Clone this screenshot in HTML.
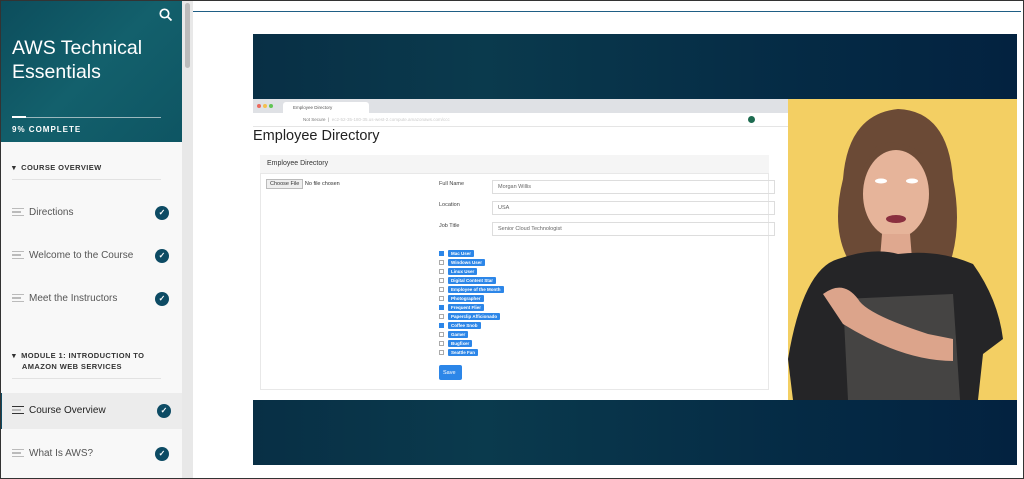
<!DOCTYPE html><html><head><style>
*{margin:0;padding:0;box-sizing:border-box}
body{width:1024px;height:479px;overflow:hidden;background:#fff;font-family:"Liberation Sans",sans-serif;position:relative}
.frame{position:absolute;inset:0;border:1px solid #333;pointer-events:none;z-index:9}
.side{position:absolute;left:0;top:0;width:182px;height:479px;background:#f8f8f8}
.hdr{position:absolute;left:0;top:0;width:182px;height:142px;background:linear-gradient(135deg,#0c4d5c,#13606c 50%,#0e5563)}
.hdr h1{position:absolute;left:12px;top:36px;color:#fff;font-size:19.5px;font-weight:normal;line-height:24px}
.bar{position:absolute;left:12px;top:117px;width:149px;height:1px;background:#9bb8bd}
.bar i{position:absolute;left:0;top:-1px;width:14px;height:2px;background:#fff}
.pct{position:absolute;left:12px;top:125px;color:#fff;font-size:8px;font-weight:bold;letter-spacing:1px}
.sec{position:absolute;left:12px;font-size:7.5px;font-weight:bold;color:#333;letter-spacing:.4px;line-height:11px}
.hr{position:absolute;left:12px;width:149px;height:1px;background:#e2e2e2}
.item{position:absolute;left:0;width:182px;height:32px;font-size:10px;color:#555}
.item .ic{position:absolute;left:12px;top:11px;width:12px;height:8px;border-top:1.5px solid #bbb;border-bottom:1.5px solid #bbb}
.item .ic:after{content:"";position:absolute;left:0;top:2px;width:9px;height:1.5px;background:#bbb}
.item span{position:absolute;left:29px;top:10px}
.item b{position:absolute;left:155px;top:9px;width:14px;height:14px;border-radius:50%;background:#0d4b64;color:#fff;font-size:8px;text-align:center;line-height:14px}
.scroll{position:absolute;left:182px;top:0;width:11px;height:479px;background:#e8e8e8}
.scroll i{position:absolute;left:3px;top:3px;width:5px;height:65px;background:#bbb;border-radius:3px}
.topline{position:absolute;left:193px;top:11px;width:828px;height:1px;background:#1f5e85}
.vid{position:absolute;left:253px;top:34px;width:764px;height:431px;background:#062a44}
.band{position:absolute;left:0;width:764px;background:linear-gradient(90deg,#082f45,#0a3a4d 30%,#052b45 70%,#032240)}
.shot{position:absolute;left:0;top:65px;width:535px;height:301px;background:#fff;font-size:6px;color:#444}
.yel{position:absolute;left:535px;top:65px;width:229px;height:301px;background:#f3cf63;overflow:hidden}
.tag{display:inline-block;background:#2c86e8;color:#fff;font-size:4.5px;padding:1px 3px;border-radius:1px;font-weight:bold}
.cbr{position:absolute;left:186px;height:9px;display:flex;align-items:center;gap:4px}
.cb{width:5px;height:5px;border:1px solid #aaa;background:#fff}
.cb.on{background:#2c86e8;border-color:#2c86e8}
.inp{position:absolute;left:239px;width:283px;height:14px;border:1px solid #ddd;font-size:5.5px;color:#666;padding:3px 5px}
</style></head><body>
<div class="side">
 <div class="hdr">
  <svg style="position:absolute;left:159px;top:8px" width="14" height="14" viewBox="0 0 14 14"><circle cx="5.5" cy="5.5" r="4.2" fill="none" stroke="#fff" stroke-width="1.7"/><path d="M8.6 8.6L12.5 12.5" stroke="#fff" stroke-width="1.8"/></svg>
  <h1>AWS Technical<br>Essentials</h1>
  <div class="bar"><i></i></div>
  <div class="pct">9% COMPLETE</div>
 </div>
 <div class="sec" style="top:162px">▾&nbsp; COURSE OVERVIEW</div>
 <div class="hr" style="top:179px"></div>
 <div class="item" style="top:197px"><i class="ic"></i><span>Directions</span><b>✓</b></div>
 <div class="item" style="top:240px"><i class="ic"></i><span>Welcome to the Course</span><b>✓</b></div>
 <div class="item" style="top:283px"><i class="ic"></i><span>Meet the Instructors</span><b>✓</b></div>
 <div class="sec" style="top:350px">▾&nbsp; MODULE 1: INTRODUCTION TO<br>&nbsp;&nbsp;&nbsp;&nbsp;AMAZON WEB SERVICES</div>
 <div class="hr" style="top:378px"></div>
 <div class="item" style="top:393px;height:36px;background:#ececec;border-left:2px solid #0d4b64;color:#222"><i class="ic" style="left:10px;top:13px;border-color:#333"></i><span style="left:27px;top:12px">Course Overview</span><b style="top:11px">✓</b></div>
 <div class="item" style="top:438px"><i class="ic"></i><span>What Is AWS?</span><b>✓</b></div>
</div>
<div class="scroll"><i></i></div>
<div class="topline"></div>
<div class="vid">
 <div class="band" style="top:0;height:65px"></div>
 <div class="band" style="top:366px;height:65px"></div>
 <div class="shot">
  <div style="position:absolute;left:0;top:0;width:535px;height:14px;background:#dfe1e5"></div>
  <div style="position:absolute;left:4px;top:5px;width:4px;height:4px;border-radius:50%;background:#ec6a5e;box-shadow:6px 0 #f4bf4f,12px 0 #61c554"></div>
  <div style="position:absolute;left:30px;top:3px;width:86px;height:11px;background:#fff;border-radius:3px 3px 0 0;font-size:4.5px;padding:3px 10px;color:#555">Employee Directory</div>
  <div style="position:absolute;left:0;top:14px;width:535px;height:14px;background:#fff;border-bottom:1px solid #e5e5e5;font-size:4.5px;color:#777;padding:4px 50px">Not Secure &nbsp;|&nbsp; <span style="color:#ccc">ec2-52-35-180-35.us-west-2.compute.amazonaws.com/ccc</span></div>
  <div style="position:absolute;left:495px;top:17px;width:7px;height:7px;border-radius:50%;background:#1d6b50"></div>
  <div style="position:absolute;left:0;top:29px;font-size:14.5px;color:#222">Employee Directory</div>
  <div style="position:absolute;left:7px;top:56px;width:509px;height:235px;border:1px solid #e8e8e8"></div>
  <div style="position:absolute;left:7px;top:56px;width:509px;height:19px;background:#f5f5f5;border-bottom:1px solid #e8e8e8;font-size:7px;color:#333;padding:5px 7px">Employee Directory</div>
  <div style="position:absolute;left:13px;top:82px;font-size:5.5px;color:#333"><span style="border:1px solid #bbb;background:#eee;padding:1px 3px">Choose File</span> No file chosen</div>
  <div style="position:absolute;left:186px;top:82px;font-size:5.5px">Full Name</div>
  <div style="position:absolute;left:186px;top:103px;font-size:5.5px">Location</div>
  <div style="position:absolute;left:186px;top:124px;font-size:5.5px">Job Title</div>
  <div class="inp" style="top:81px">Morgan Willis</div>
  <div class="inp" style="top:102px">USA</div>
  <div class="inp" style="top:123px">Senior Cloud Technologist</div>
  <div class="cbr" style="top:150px"><i class="cb on"></i><span class="tag">Mac User</span></div>
  <div class="cbr" style="top:159px"><i class="cb"></i><span class="tag">Windows User</span></div>
  <div class="cbr" style="top:168px"><i class="cb"></i><span class="tag">Linux User</span></div>
  <div class="cbr" style="top:177px"><i class="cb"></i><span class="tag">Digital Content Star</span></div>
  <div class="cbr" style="top:186px"><i class="cb"></i><span class="tag">Employee of the Month</span></div>
  <div class="cbr" style="top:195px"><i class="cb"></i><span class="tag">Photographer</span></div>
  <div class="cbr" style="top:204px"><i class="cb on"></i><span class="tag">Frequent Flier</span></div>
  <div class="cbr" style="top:213px"><i class="cb"></i><span class="tag">Paperclip Afficionado</span></div>
  <div class="cbr" style="top:222px"><i class="cb on"></i><span class="tag">Coffee Snob</span></div>
  <div class="cbr" style="top:231px"><i class="cb"></i><span class="tag">Gamer</span></div>
  <div class="cbr" style="top:240px"><i class="cb"></i><span class="tag">Bugfixer</span></div>
  <div class="cbr" style="top:249px"><i class="cb"></i><span class="tag">Seattle Fan</span></div>
  <div style="position:absolute;left:186px;top:266px;width:23px;height:15px;background:#2c86e8;border-radius:2px;color:#fff;font-size:5.5px;padding:5px 4px">Save</div>
 </div>
 <div class="yel">
  <svg width="229" height="301" viewBox="0 0 229 301">
   <path d="M55 80 Q60 15 110 10 Q160 12 165 80 Q175 130 160 170 L70 175 Q40 140 55 80Z" fill="#6b4a36"/>
   <ellipse cx="108" cy="95" rx="33" ry="44" fill="#e6b49a"/>
   <path d="M75 68 Q95 40 135 55 Q115 40 90 45Z" fill="#6b4a36"/>
   <ellipse cx="93" cy="82" rx="6" ry="2.5" fill="#fff"/><ellipse cx="124" cy="82" rx="6" ry="2.5" fill="#fff"/>
   <ellipse cx="108" cy="120" rx="10" ry="4" fill="#8a2f3f"/>
   <path d="M94 135 L122 135 L124 160 L92 160Z" fill="#dfa88f"/>
   <path d="M5 301 L0 260 Q15 170 50 160 Q85 148 110 155 Q150 150 185 165 Q210 200 215 240 L195 255 L190 301Z" fill="#252527"/>
   <path d="M55 200 L165 195 L172 301 L60 301Z" fill="#5c5a57" opacity=".6"/>
   <path d="M35 195 Q55 180 70 200 Q78 215 140 235 L165 240 L165 262 Q115 262 55 225Z" fill="#dca48b"/>
  </svg>
 </div>
</div>
<div class="frame"></div>
</body></html>
